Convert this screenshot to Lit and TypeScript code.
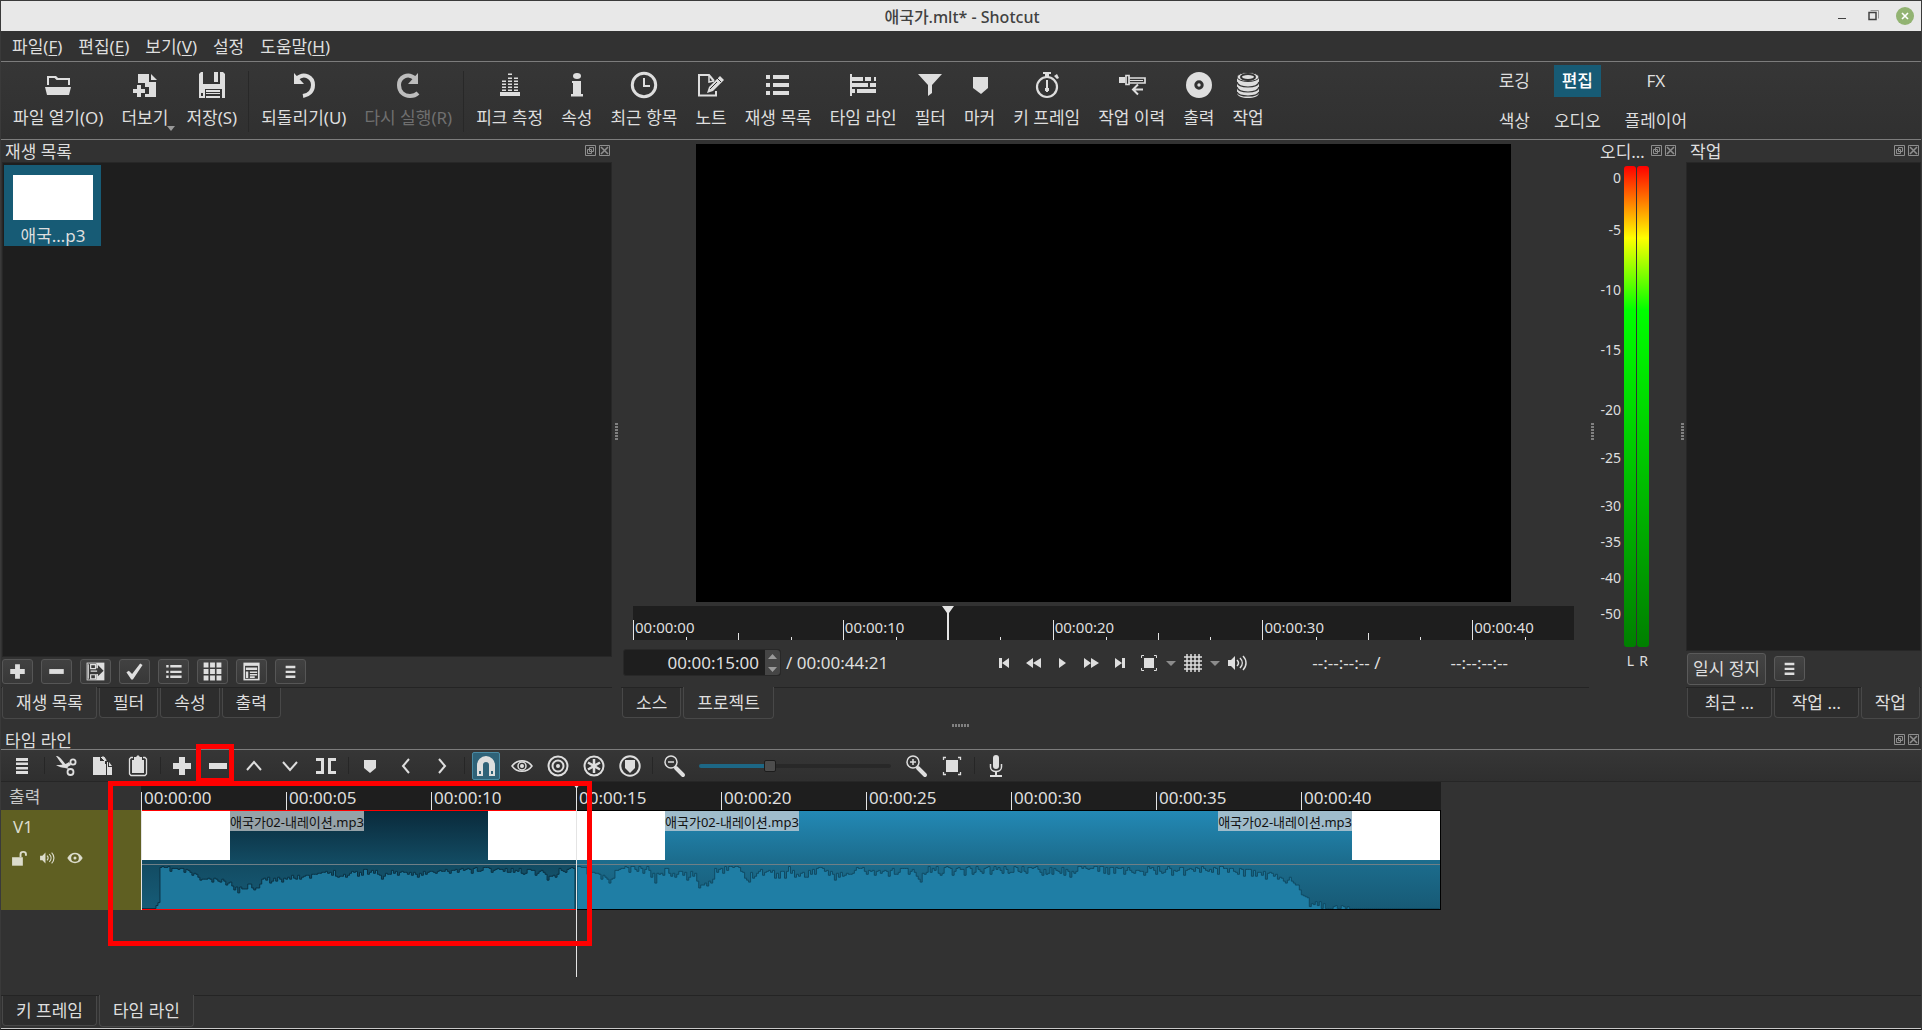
import { LitElement, html, css, svg, nothing } from "lit";
import type { SVGTemplateResult } from "lit";
import { customElement, property } from "lit/decorators.js";
import { classMap } from "lit/directives/class-map.js";
import { styleMap } from "lit/directives/style-map.js";

type Icon = { box: number; art: SVGTemplateResult };

const icons: Record<string, Icon> = {
  open: { box: 28, art: svg`<path d="M4 14V6h7l2 2h12v6" fill="none" stroke="currentColor" stroke-width="2"/><path d="M4 5h8l2 2H4zM1 16h26l-2 8H3z"/>` },
  more: { box: 28, art: svg`<path d="M7 3h11v8h7v15H14v-3h4v-7h-4v-4H7z"/><path d="M20 3l6 6h-6z"/><path d="M6 14h4v4h4v4h-4v4H6v-4H2v-4h4z"/>` },
  save: { box: 28, art: svg`<path d="M1 3l2-2h2v12h17V1h3l2 2v24h-3v-9H7v9H1z"/><path d="M16 1h4v10h-4zM8 19h14v2H8zM8 22h14v1H8zM8 25h14v2H8z"/><path d="M3 22h2v3H3z" fill="#333"/>` },
  undo: { box: 28, art: svg`<path d="M7 7.500C14 1 23 6 23 14c0 6-4 10-10 11" fill="none" stroke="currentColor" stroke-width="4"/><path d="M4 2v11h10z"/>` },
  redo: { box: 28, art: svg`<path d="M21 7.500C14 1 5 6 5 14c0 7 5 11 11 11 3 0 6-1 8-3" fill="none" stroke="currentColor" stroke-width="4"/><path d="M24 2v11H14z"/>` },
  peak: { box: 28, art: svg`<path d="M4 21h20v4H4z"/>${[10, 13, 16, 19].map((y) => svg`<path d="M6 ${y - 0.5}h4v1.500H6zM12 ${y - 0.5}h4v1.500h-4zM18 ${y - 0.5}h4v1.500h-4z"/>`)}<path d="M12 2.500h4V4h-4zM12 6.500h4V8h-4zM18 6.500h4V8h-4z"/>` },
  info: { box: 28, art: svg`<ellipse cx="14" cy="5" rx="4" ry="3"/><path d="M9 10h9v13h2v2.500H8V23h2V12H9z"/>` },
  clock: { box: 28, art: svg`<circle cx="14" cy="14" r="11.700" fill="none" stroke="currentColor" stroke-width="3"/><path d="M14 7v8h6" fill="none" stroke="currentColor" stroke-width="2"/>` },
  note: { box: 28, art: svg`<path d="M19 20v4.500H2V4h10l5 6" fill="none" stroke="currentColor" stroke-width="2"/><path d="M12 4v7l5-1" fill="none" stroke="currentColor" stroke-width="1.500"/><path d="M10 22l2-6L23 5l4 4-11 11z"/><path d="M20 7l4 4M13 18l7-7" stroke="#333" stroke-width="1"/>` },
  list: { box: 28, art: svg`<path d="M2 4h4v4H2zM9 4h16v4H9zM2 12h4v4H2zM9 12h16v4H9zM2 20h4v4H2zM9 20h16v4H9z"/>` },
  timeline: { box: 28, art: svg`<path d="M1 3h2v22H1zM3 6h11v4H3zM16 6h6v4h-6zM25 6h2v4h-2zM3 12h16v4H3zM21 12h6v4h-6zM3 18h3v4H3zM8 18h19v4H8z"/>` },
  filter: { box: 28, art: svg`<path d="M2 3h24L16 14v8l-4 3V14z"/>` },
  marker: { box: 28, art: svg`<path d="M7 6h15v11l-7 6-8-6z"/>` },
  watch: { box: 28, art: svg`<circle cx="14" cy="16" r="10" fill="none" stroke="currentColor" stroke-width="2.200"/><path d="M10 1h8v2h-2v4h-4V3h-2zM13 9h2v12h-2z"/><path d="M12 17h4v3h-4zM21 5l3-2 2 4-2 1z"/>` },
  history: { box: 28, art: svg`<path d="M1 6h6v6H1z"/><path d="M8 4.500h3v9H8zM11 7h16v5H11z" fill="none" stroke="currentColor" stroke-width="1.700"/><path d="M12 9h13v1H12z"/><path d="M25 18.500H15M20 13.500l-5 5 5 5" fill="none" stroke="currentColor" stroke-width="2"/>` },
  disc: { box: 28, art: svg`<circle cx="14" cy="14" r="13"/><circle cx="14" cy="14" r="3.200" fill="currentColor" stroke="#333" stroke-width="3"/>` },
  jobs: { box: 28, art: svg`<path d="M3 5v17c0 3 5 5 11 5s11-2 11-5V5z"/><ellipse cx="14" cy="6" rx="11" ry="4.500" stroke="#333" stroke-width="1"/><ellipse cx="14" cy="6" rx="7" ry="3" stroke="#333" stroke-width="2"/><path d="M3 11c1 4 6 5 11 5s10-1 11-5M3 16c1 4 6 5 11 5s10-1 11-5M3 21c1 3 6 4 11 4s10-1 11-4" fill="none" stroke="#333" stroke-width="1.200"/>` },
  menu: { box: 26, art: svg`<path d="M7 5h12v3H7zM7 9.500h12v2.500H7zM7 14h12v2.500H7zM7 18h12v3H7z"/>` },
  bars: { box: 26, art: svg`<path d="M7 6h12v3H7zM7 12h12v3H7zM7 18h12v3H7z"/>` },
  cut: { box: 26, art: svg`<path d="M3 3c3 0 5 2 13 13l-4-1C8 10 6 7 3 3zM3 12c5 0 9 0 13-3l2 3-5 3c-4 0-7-1-10-3z"/><circle cx="20" cy="9" r="2.600" fill="none" stroke="currentColor" stroke-width="1.800"/><circle cx="17.500" cy="19" r="3" fill="none" stroke="currentColor" stroke-width="1.800"/>` },
  copy: { box: 26, art: svg`<path d="M4 4h7v4h5v3h1v11H4z"/><path d="M12 4l4 4M13 4h2l2 3v1z" stroke="currentColor" stroke-width="1"/><path d="M18 9h1v5h4v8h-5z"/><path d="M20 9l3 4h-3z"/>` },
  paste: { box: 26, art: svg`<path d="M8 4.500H6L4.500 6v15L6 22.500h14l1.500-1.500V6L20 4.500h-2" fill="none" stroke="currentColor" stroke-width="1.300"/><path d="M7 7h12v13H7zM9 4h2l2-2 2 2h2v3H9z"/>` },
  plus: { box: 26, art: svg`<path d="M10 4h6v6h6v6h-6v6h-6v-6H4v-6h6z"/>` },
  minus: { box: 26, art: svg`<path d="M4 10h18v6H4z"/>` },
  up: { box: 26, art: svg`<path d="M6 17l7-8 7 8" fill="none" stroke="currentColor" stroke-width="2"/>` },
  down: { box: 26, art: svg`<path d="M6 9l7 8 7-8" fill="none" stroke="currentColor" stroke-width="2"/>` },
  split: { box: 26, art: svg`<path d="M3 5h8v16H3v-3h5V8H3zM23 5h-8v16h8v-3h-5V8h5z"/>` },
  flag: { box: 26, art: svg`<path d="M7 7h12v8l-6 5-6-5z"/>` },
  prev: { box: 26, art: svg`<path d="M16 6l-6 7 6 7" fill="none" stroke="currentColor" stroke-width="2"/>` },
  next: { box: 26, art: svg`<path d="M10 6l6 7-6 7" fill="none" stroke="currentColor" stroke-width="2"/>` },
  magnet: { box: 26, art: svg`<path d="M4 23V12a9 9 0 0 1 18 0v11h-6V12a3 3 0 0 0-6 0v11z"/><path d="M6 18h2v3H6zM18 18h2v3h-2z" fill="#2f6278"/>` },
  scrub: { box: 26, art: svg`<path d="M3 13c5-7 15-7 20 0-5 7-15 7-20 0z" fill="none" stroke="currentColor" stroke-width="1.500"/><circle cx="13" cy="13" r="4" fill="none" stroke="currentColor" stroke-width="1.500"/><circle cx="13" cy="13" r="2"/>` },
  ripple: { box: 26, art: svg`<circle cx="13" cy="13" r="9.500" fill="none" stroke="currentColor" stroke-width="2"/><circle cx="13" cy="13" r="5.500" fill="none" stroke="currentColor" stroke-width="2"/><circle cx="13" cy="13" r="2"/>` },
  rippleAll: { box: 26, art: svg`<circle cx="13" cy="13" r="9.500" fill="none" stroke="currentColor" stroke-width="2"/><path d="M13 6v14M7 9.500l12 7M19 9.500l-12 7" stroke="currentColor" stroke-width="2.500"/>` },
  rippleMark: { box: 26, art: svg`<circle cx="13" cy="13" r="9.700" fill="none" stroke="currentColor" stroke-width="2"/><path d="M8 7h10v8l-5 5-5-5z"/>` },
  zoomOut: { box: 26, art: svg`<circle cx="10" cy="9" r="6" fill="none" stroke="currentColor" stroke-width="1.500"/><path d="M7 9h6" stroke="currentColor" stroke-width="1.500"/><path d="M15 15l7 7" stroke="currentColor" stroke-width="4" stroke-linecap="round"/>` },
  zoomIn: { box: 26, art: svg`<circle cx="10" cy="9" r="6" fill="none" stroke="currentColor" stroke-width="1.500"/><path d="M7 9h6M10 6v6" stroke="currentColor" stroke-width="1.500"/><path d="M15 15l7 7" stroke="currentColor" stroke-width="4" stroke-linecap="round"/>` },
  fit: { box: 26, art: svg`<path d="M7 7h12v12H7z"/><path d="M4.500 7V4.500H7M19 4.500h2.500V7M21.500 19v2.500H19M7 21.500H4.500V19" fill="none" stroke="currentColor" stroke-width="1.300"/>` },
  mic: { box: 26, art: svg`<rect x="10" y="2" width="6" height="14" rx="3"/><path d="M7.500 11v3c0 6 11 6 11 0v-3" fill="none" stroke="currentColor" stroke-width="1.500"/><path d="M12 18h2v4h-2zM7 22h12v2H7z"/>` },
  update: { box: 26, art: svg`<path d="M2 2h22v22H2z"/><path d="M3 3h11v6h2V5l7 7-7 7v-3h-2v7H3z" fill="#383838"/><path d="M4 4v18M7 4.500h6v5H7zM7 17h6v5H7zM7 12.500h8" fill="none" stroke="currentColor" stroke-width="1.500"/>` },
  check: { box: 26, art: svg`<path d="M3 14l3-2 4 4L20 3l3 2-12 18H9z"/>` },
  details: { box: 26, art: svg`<path d="M4 5h3v3H4zM9 5h14v3H9zM4 12h3v3H4zM9 12h14v3H9zM4 18h3v3H4zM9 18h14v3H9z"/>` },
  tiles: { box: 26, art: svg`<path d="M2 2h6v6H2zM10 2h6v6h-6zM18 2h6v6h-6zM2 10h6v6H2zM10 10h6v6h-6zM18 10h6v6h-6zM2 18h6v6H2zM10 18h6v6h-6zM18 18h6v6h-6z"/>` },
  sheet: { box: 26, art: svg`<path d="M3 2h20v22H3z"/><path d="M5 6h16v16H5z" fill="#383838"/><path d="M6 8h14v3H6zM6 13h3v8H6zM11 13h9v2h-9zM11 16h9v2h-9zM11 19h6v2h-6z"/>` },
  toStart: { box: 26, art: svg`<path d="M8 8h3v10H8zM18 8v10l-7-5z"/>` },
  rewind: { box: 26, art: svg`<path d="M13 8v10l-7-5zM21 8v10l-8-5z"/>` },
  play: { box: 26, art: svg`<path d="M10 8v10l7-5z"/>` },
  forward: { box: 26, art: svg`<path d="M6 8v10l7-5zM13 8v10l8-5z"/>` },
  toEnd: { box: 26, art: svg`<path d="M8 8v10l7-5zM15 8h3v10h-3z"/>` },
  frame: { box: 26, art: svg`<path d="M8 8h10v10H8z"/><path d="M5.500 8V5.500H8M18 5.500h2.500V8M20.500 18v2.500H18M8 20.500H5.500V18" fill="none" stroke="currentColor" stroke-width="1"/>` },
  grid: { box: 26, art: svg`<path d="M7 4v18M11 4v18M15 4v18M19 4v18M4 7h18M4 11h18M4 15h18M4 19h18" fill="none" stroke="currentColor" stroke-width="1.500"/>` },
  sound: { box: 26, art: svg`<path d="M4 10h3l4-4v14l-4-4H4z"/><path d="M13 10c2 2 2 4 0 6M16 8c3 3 3 7 0 10M19 6c4 4 4 10 0 14" fill="none" stroke="currentColor" stroke-width="1.500"/>` },
  caret: { box: 12, art: svg`<path d="M1 4h10L6 9z" fill="#8c8c8c"/>` },
  unlock: { box: 26, art: svg`<path d="M4 12h14v11H4z"/><path d="M15 12V8c0-4 7-4 7 0v2" fill="none" stroke="currentColor" stroke-width="2.500"/>` },
  eye: { box: 26, art: svg`<path d="M3 13c5-9 15-9 20 0-5 9-15 9-20 0z"/><circle cx="13" cy="13" r="3.500" stroke="#5f5f22" stroke-width="3"/>` },
  float: { box: 11, art: svg`<path d="M.5.500h10v10H.500zM4.500 2.500h4v4h-4zM2.500 4.500h4v4h-4z" fill="none" stroke="#8e8e8e" stroke-width="1"/>` },
  close: { box: 11, art: svg`<path d="M.5.500h10v10H.500z" fill="none" stroke="#8e8e8e" stroke-width="1"/><path d="M2 2l7 7M9 2l-7 7" stroke="#8e8e8e" stroke-width="1.600"/>` },
};

function icon(name: string, size: number) {
  const { box, art } = icons[name];
  return html`<svg class="icon" width=${size} height=${size} viewBox="0 0 ${box} ${box}" aria-hidden="true">${art}</svg>`;
}

const base = css`
  * { box-sizing: border-box; }
  button, input {
    font: inherit;
    color: inherit;
    margin: 0;
    padding: 0;
    border: 0;
    background: none;
  }
  button { white-space: nowrap; }
  .icon { display: block; fill: currentColor; flex: none; }
`;

/* ---------- Dock chrome ---------- */

@customElement("dock-title")
class DockTitle extends LitElement {
  @property() label = "";
  static styles = [base, css`
    :host { display: flex; height: 22px; padding: 0 2px 0 4px; align-items: center; gap: 3px; flex: none; }
    .name { flex: 1; white-space: nowrap; overflow: hidden; line-height: 22px; font-weight: 400; font-size: 17px; margin: 0; padding-top: 2px; }
    button { margin-bottom: 2px; }
  `];
  render() {
    return html`<h2 class="name">${this.label}</h2>
      <button aria-label="분리">${icon("float", 11)}</button>
      <button aria-label="닫기">${icon("close", 11)}</button>`;
  }
}

@customElement("dock-tabs")
class DockTabs extends LitElement {
  @property({ attribute: false }) tabs: string[] = [];
  @property({ type: Number }) active = 0;
  @property({ type: Boolean, reflect: true }) stretch = false;
  static styles = [base, css`
    :host { display: flex; height: 33px; gap: 2px; padding-left: 1px; align-items: flex-start; flex: none; border-top: 1px solid #242424; }
    :host([stretch]) { padding-right: 1px; }
    :host([stretch]) .tab { flex-grow: 2; }
    :host([stretch]) .tab.on { flex-grow: 0; }
    .tab { height: 30px; padding: 0 13px; border: 1px solid #484848; border-top: 0; border-radius: 0 0 4px 4px; background: #2d2d2d; line-height: 28px; }
    .tab.on { height: 32px; margin-top: -1px; background: #323232; line-height: 32px; }
  `];
  render() {
    return this.tabs.map((t, i) => html`<button role="tab" aria-selected=${i === this.active}
      class=${classMap({ tab: true, on: i === this.active })}>${t}</button>`);
  }
}

/* ---------- Playlist ---------- */

@customElement("playlist-dock")
class PlaylistDock extends LitElement {
  static styles = [base, css`
    :host { display: flex; flex-direction: column; min-width: 0; }
    .files { flex: 1; background: #1e1e1e; border: 1px solid #272727; padding: 2px 1px; margin: 0 0 2px 1px; list-style: none; }
    .file { width: 97px; height: 81px; background: #175b75; padding: 10px 8px 0 9px; text-align: center; }
    .thumb { height: 45px; background: #fff; }
    .name { line-height: 32px; display: block; }
    .tools { display: flex; gap: 8px; padding: 0 1px; margin-bottom: 3px; }
    .tools button { width: 31px; height: 25px; border: 1px solid #565656; border-radius: 3px; background: linear-gradient(#414141, #383838); display: grid; place-items: center; }
    dock-tabs { --tab-gap: 3px; }
  `];
  render() {
    const tools = [["plus", "추가"], ["minus", "제거"], ["update", "업데이트"], ["check", "선택"], ["details", "상세"], ["tiles", "타일"], ["sheet", "아이콘"], ["bars", "메뉴"]];
    return html`<dock-title label="재생 목록"></dock-title>
      <ul class="files"><li class="file"><div class="thumb"></div><span class="name">애국…p3</span></li></ul>
      <div class="tools">${tools.map(([n, t]) => html`<button aria-label=${t}>${icon(n, 21)}</button>`)}</div>
      <dock-tabs .tabs=${["재생 목록", "필터", "속성", "출력"]} active="0"></dock-tabs>`;
  }
}

/* ---------- Player ---------- */

@customElement("player-view")
class PlayerView extends LitElement {
  static styles = [base, css`
    :host { display: flex; flex-direction: column; min-width: 0; }
    .stage { flex: 1; min-height: 0; display: flex; justify-content: center; padding: 4px 15px 4px 12px; }
    .video { height: 100%; aspect-ratio: 16 / 9; background: #000; }
    .ruler { position: relative; display: flex; align-items: flex-end; height: 34px; margin: 0 15px 0 12px; background: #1e1e1e; font-size: 15px; }
    .tick { flex: 1 1 0; min-width: 0; height: 3px; border-left: 1px solid #e4e4e4; }
    .tick.mid { height: 7px; }
    .tick.major { height: 20px; line-height: 14px; padding-left: 1px; white-space: nowrap; }
    .tick.last { flex-grow: 0.93; }
    .head { position: absolute; top: 0; bottom: 0; width: 12px; margin-left: -6px; display: flex; justify-content: center; }
    .head svg { display: block; height: 34px; width: 12px; fill: #e4e4e4; }
    .transport { display: flex; align-items: center; height: 45px; padding: 0 81px 0 2px; margin-bottom: 2px; }
    .spin { display: flex; width: 158px; height: 27px; border: 1px solid #282828; border-radius: 3px; background: #1e1e1e; }
    .spin input { flex: 1; min-width: 0; text-align: right; padding-right: 6px; }
    .steps { width: 15px; background: #454545; border-radius: 0 3px 3px 0; display: grid; place-items: center; }
    .steps svg { display: block; }
    .total { margin-left: 5px; flex: 1; white-space: nowrap; }
    .keys { display: flex; align-items: center; gap: 3px; }
    .keys .narrow { width: 12px; }
    .keys button { width: 26px; }
    .range { margin-left: 62px; display: flex; gap: 70px; white-space: nowrap; }
  `];
  render() {
    const ticks = Array.from({ length: 18 }, (_, i) => i);
    const keys = [["toStart", "처음"], ["rewind", "되감기"], ["play", "재생"], ["forward", "빨리 감기"], ["toEnd", "끝"], ["frame", "확대"], ["caret", "확대 메뉴"], ["grid", "격자"], ["caret", "격자 메뉴"], ["sound", "음량"]];
    return html`<div class="stage"><div class="video"></div></div>
      <div class="ruler">
        ${ticks.map((i) => html`<div class=${classMap({ tick: true, mid: i % 4 === 2, major: i % 4 === 0, last: i === 17 })}>${i % 4 === 0 ? `00:00:${String(i * 2.5).padStart(2, "0")}` : nothing}</div>`)}
        <div class="head" style=${styleMap({ left: `${(15 / 44.84) * 100}%` })}><svg viewBox="0 0 12 34"><path d="M0 0h12L7 7v27H5V7z"/></svg></div>
      </div>
      <div class="transport">
        <div class="spin"><input aria-label="위치" value="00:00:15:00" /><div class="steps">
          <svg width="9" height="20" viewBox="0 0 9 20" fill="#9a9a9a"><path d="M0 6l4.500-5L9 6zM0 14l4.500 5L9 14z"/></svg></div></div>
        <span class="total">/ 00:00:44:21</span>
        <div class="keys">${keys.map(([n, t]) => html`<button aria-label=${t} class=${classMap({ narrow: n === "caret" })}>${icon(n, n === "caret" ? 12 : 26)}</button>`)}</div>
        <div class="range"><span>--:--:--:-- /</span><span>--:--:--:--</span></div>
      </div>
      <dock-tabs .tabs=${["소스", "프로젝트"]} active="1"></dock-tabs>`;
  }
}

/* ---------- Peak meter ---------- */

@customElement("peak-meter")
class PeakMeter extends LitElement {
  static styles = [base, css`
    :host { display: flex; flex-direction: column; }
    .meter { flex: 1; display: flex; gap: 3px; padding: 4px 0 0; font-size: 14px; }
    .scale { width: 25px; display: flex; flex-direction: column; }
    .mark { flex: 1 1 0; min-height: 0; display: flex; align-items: flex-end; justify-content: flex-end; line-height: 20px; }
    .bars { display: flex; gap: 1px; }
    .bar { width: 12px; border-radius: 3px; background: linear-gradient(#f00 0%, #ff0 15%, #0f0 30%, #007f00 100%); }
    .legend { height: 73px; padding: 4px 0 0 28px; display: flex; font-size: 14px; line-height: 20px; }
    .legend span { width: 13px; text-align: center; }
  `];
  render() {
    const marks: [string, number][] = [["0", 22], ["-5", 52], ["-10", 60], ["-15", 60], ["-20", 60], ["-25", 48], ["-30", 48], ["-35", 36], ["-40", 36], ["-50", 36], ["", 23]];
    return html`<dock-title label="오디…"></dock-title>
      <div class="meter">
        <div class="scale">${marks.map(([t, w]) => html`<div class="mark" style=${styleMap({ flexGrow: String(w) })}>${t}</div>`)}</div>
        <div class="bars"><div class="bar"></div><div class="bar"></div></div>
      </div>
      <div class="legend"><span>L</span><span>R</span></div>`;
  }
}

/* ---------- Jobs ---------- */

@customElement("jobs-dock")
class JobsDock extends LitElement {
  static styles = [base, css`
    :host { display: flex; flex-direction: column; min-width: 0; }
    .queue { flex: 1; background: #1e1e1e; border: 1px solid #272727; }
    .row { display: flex; align-items: center; gap: 8px; height: 35px; padding-left: 1px; margin-bottom: 1px; }
    .row button { border: 1px solid #5a5a5a; border-radius: 3px; background: linear-gradient(#444, #393939); }
    .pause { height: 32px; padding: 0 5px; }
    .more { width: 31px; height: 25px; display: grid; place-items: center; }
  `];
  render() {
    return html`<dock-title label="작업"></dock-title>
      <div class="queue"></div>
      <div class="row"><button class="pause">일시 정지</button><button class="more" aria-label="메뉴">${icon("bars", 21)}</button></div>
      <dock-tabs stretch .tabs=${["최근 …", "작업 …", "작업"]} active="2"></dock-tabs>`;
  }
}

/* ---------- Timeline ---------- */

/* Waveform envelope as [x, depth below the zero line], in clip pixels. */
const firstWave: [number, number][] = [[0, 45], [12, 45], [17, 36], [18, 2], [34, 3], [51, 7], [56, 13], [66, 14], [78, 15], [88, 18], [96, 24], [104, 20], [114, 21], [120, 14], [145, 12], [153, 9], [161, 12], [177, 8], [194, 6], [200, 10], [210, 7], [226, 5], [236, 6], [240, 14], [247, 5], [263, 8], [288, 7], [308, 5], [341, 3], [365, 4], [390, 5], [402, 6], [409, 13], [418, 4], [433, 3], [435, 3]];
const secondWave: [number, number][] = [[0, 1], [14, 6], [24, 11], [36, 15], [39, 2], [60, 3], [72, 3], [78, 12], [84, 4], [100, 5], [108, 9], [116, 6], [123, 19], [132, 16], [138, 3], [144, 4], [145, 18], [147, 1], [160, 1], [170, 14], [178, 4], [196, 6], [206, 8], [212, 2], [222, 10], [240, 3], [255, 7], [272, 10], [281, 2], [300, 7], [316, 5], [336, 3], [343, 16], [349, 3], [400, 3], [450, 3], [485, 3], [492, 7], [498, 2], [550, 3], [565, 8], [572, 3], [620, 3], [655, 3], [675, 6], [696, 9], [707, 14], [718, 12], [722, 22], [726, 32], [739, 38], [756, 42], [779, 44], [865, 45]];

function wavePath(env: [number, number][], width: number, rough: number, quietUntil: number, quietFrom: number) {
  let seed = 11;
  const rnd = () => (seed = (seed * 16807) % 2147483647) / 2147483647;
  let k = 0;
  let d = "";
  for (let x = 0; x <= width; x += 2) {
    while (k < env.length - 2 && env[k + 1][0] <= x) k++;
    const [x0, y0] = env[k];
    const [x1, y1] = env[k + 1];
    const mean = y0 + ((y1 - y0) * Math.min(1, (x - x0) / (x1 - x0)));
    const noise = x < quietUntil || x > quietFrom ? 0 : (Math.pow(rnd(), 2) - 0.2) * rough;
    d += `L${x} ${Math.round(Math.max(1, Math.min(44, mean + noise))) + 0.5}H${x + 2}`;
  }
  return `M0 46${d}V46z`;
}

@customElement("timeline-clip")
class TimelineClip extends LitElement {
  @property({ attribute: false }) wave = "";
  @property({ type: Number }) span = 0;
  @property({ type: Boolean, reflect: true }) selected = false;
  static styles = [base, css`
    :host { display: flex; flex-direction: column; height: 100px; border: 1px solid #000; border-left-width: 0; background: linear-gradient(#2389b5, #1c6d8e 50%, #175a75); --shape: #1f7ea5; --edge: #104a63; --tag: #9fbccb; }
    :host([selected]) { border-color: #f00; background: linear-gradient(#0a2a3b, #124a61 50%, #165c77); --shape: #1e789c; --edge: #0b3142; --tag: #96a2a8; }
    .strip { display: flex; height: 54px; align-items: flex-start; border-bottom: 1px solid #6f7f86; }
    .thumb { width: 88px; height: 49px; background: #fff; }
    .name { height: 20px; background: var(--tag); color: #111; font-size: 13px; line-height: 22px; white-space: nowrap; }
    .fill { flex: 1; }
    svg { display: block; width: 100%; height: 44px; }
    path { fill: var(--shape); stroke: var(--edge); stroke-width: 1px; }
  `];
  render() {
    return html`<div class="strip">
        <div class="thumb"></div><span class="name">애국가02-내레이션.mp3</span><div class="fill"></div>
        ${this.selected ? nothing : html`<span class="name">애국가02-내레이션.mp3</span>`}<div class="thumb"></div>
      </div>
      <svg viewBox="0 0 ${this.span} 45" preserveAspectRatio="none" aria-hidden="true"><path d=${this.wave}></path></svg>`;
  }
}

@customElement("timeline-dock")
class TimelineDock extends LitElement {
  static styles = [base, css`
    :host { display: flex; flex-direction: column; position: relative; }
    dock-title { height: 18px; }
    .tools { display: flex; align-items: center; height: 33px; padding-left: 3px; border-top: 1px solid #7c7c7c; border-bottom: 1px solid #262626; background: linear-gradient(#363636, #2f2f2f); }
    .tools button { width: 36px; height: 28px; display: grid; place-items: center; }
    .tools .on { width: 28px; margin: 0 4px; background: #2f6278; border: 1px solid #4a8aa3; border-radius: 2px; }
    .sep { width: 8px; height: 17px; display: grid; grid-template-columns: 1px; justify-content: center; }
    .sep::before { content: ""; background: #262626; }
    .zoom { appearance: none; width: 192px; height: 14px; margin: 0 7px; }
    .zoom::-webkit-slider-runnable-track { height: 4px; border-radius: 2px; background: linear-gradient(90deg, #1d6785 36%, #282828 36%); }
    .zoom::-webkit-slider-thumb { appearance: none; width: 12px; height: 12px; margin-top: -4px; border: 1px solid #1c1c1c; border-radius: 2px; background: #4d4d4d; }
    .area { position: relative; display: grid; grid-template-columns: 140px 1fr; grid-template-rows: 28px 100px; height: 213px; }
    .out { padding-left: 8px; line-height: 30px; color: #c8c8c8; }
    .ruler { display: flex; align-items: flex-end; width: 1300px; background: #1e1e1e; }
    .mark { width: 145px; height: 18px; border-left: 1px solid #e4e4e4; padding-left: 2px; line-height: 12px; }
    .mark:last-child { width: 140px; }
    .track { background: #5f5f22; padding: 5px 8px; color: #dcdccc; }
    .track h3 { margin: 0; padding-left: 4px; font-size: 17px; font-weight: 400; line-height: 24px; }
    .flags { display: flex; gap: 8px; padding-top: 9px; }
    .clips { display: grid; grid-template-columns: 435px 864px; border-left: 1px solid #e4e4e4; width: 1300px; }
    .head { position: absolute; left: 571px; top: 2px; width: 9px; height: 193px; fill: #e4e4e4; }
    .note { position: absolute; border: 5px solid #f00; }
    .note.clip { left: 107px; top: 50px; width: 484px; height: 165px; }
    .note.tool { left: 195px; top: 13px; width: 38px; height: 39px; }
  `];
  render() {
    const b = (n: string, label: string, on = false) => html`<button aria-label=${label} class=${classMap({ on })}>${icon(n, 26)}</button>`;
    const sep = html`<span class="sep"></span>`;
    const times = ["00", "05", "10", "15", "20", "25", "30", "35", "40"];
    return html`<dock-title label="타임 라인"></dock-title>
      <div class="tools">
        ${b("menu", "메뉴")}${sep}${b("cut", "잘라내기")}${b("copy", "복사")}${b("paste", "붙여넣기")}${sep}
        ${b("plus", "추가")}${b("minus", "리플 삭제")}${b("up", "올리기")}${b("down", "덮어쓰기")}${b("split", "나누기")}${sep}
        ${b("flag", "마커")}${b("prev", "이전")}${b("next", "다음")}${sep}
        ${b("magnet", "스냅", true)}${b("scrub", "스크럽")}${b("ripple", "리플")}${b("rippleAll", "전체 리플")}${b("rippleMark", "마커 리플")}${sep}
        ${b("zoomOut", "축소")}<input class="zoom" type="range" min="0" max="100" value="36" aria-label="확대 비율" />${b("zoomIn", "확대")}${b("fit", "맞춤")}${sep}${b("mic", "녹음")}
      </div>
      <div class="area">
        <div class="out">출력</div>
        <div class="ruler">${times.map((t) => html`<div class="mark">00:00:${t}</div>`)}</div>
        <div class="track"><h3>V1</h3><div class="flags">${icon("unlock", 20)}${icon("sound", 20)}${icon("eye", 20)}</div></div>
        <div class="clips">
          <timeline-clip selected .span=${435} .wave=${wavePath(firstWave, 433, 6, 20, 430)}></timeline-clip>
          <timeline-clip .span=${865} .wave=${wavePath(secondWave, 863, 9, 2, 780)}></timeline-clip>
        </div>
        <svg class="head" viewBox="0 0 9 193" aria-hidden="true"><path d="M1 0h7L5 4v189H4V4z"/></svg>
      </div>
      <dock-tabs .tabs=${["키 프레임", "타임 라인"]} active="1"></dock-tabs>
      <div class="note tool"></div><div class="note clip"></div>`;
  }
}

/* ---------- Window ---------- */

@customElement("app-root")
class AppRoot extends LitElement {
  static styles = [base, css`
    :host { display: flex; flex-direction: column; min-height: 100vh; box-sizing: border-box; border: 1px solid #3a3a3a; border-bottom-color: #111; background: #323232; color: #dedede; font-family: "Noto Sans", "Noto Sans CJK KR", sans-serif; font-size: 17px; line-height: 24px; }
    .title { display: flex; align-items: center; height: 30px; background: #e8e8e8; color: #414141; }
    .title h1 { flex: 1; margin: 0; padding: 2px 0 0 92px; text-align: center; font-size: 16px; font-weight: 500; line-height: 32px; }
    .win { display: flex; align-items: center; gap: 12px; width: 90px; padding-right: 7px; justify-content: flex-end; }
    .menu { display: flex; gap: 16px; height: 31px; padding: 1px 11px 0; line-height: 29px; border-bottom: 1px solid #7c7c7c; }
    .menu u { text-underline-offset: 2px; }
    .tools { display: flex; height: 78px; border-bottom: 1px solid #7c7c7c; background: linear-gradient(#363636, #303030); padding: 9px 0 7px 3px; }
    .tool { display: flex; flex-direction: column; align-items: center; padding: 0 9px; gap: 7px; line-height: 24px; position: relative; }
    .tool.off { color: #6f6f6f; }
    .tool.off .icon { color: #bdbdbd; }
    .tool .drop { position: absolute; right: 2px; bottom: 1px; }
    .sep { width: 1px; margin: 0 3px 0 2px; background: #282828; }
    .modes { flex: 1; display: grid; grid-template-columns: 47px 47px 78px; grid-template-rows: 32px 32px; gap: 8px 16px; justify-content: center; margin-top: -6px; padding-right: 8px; line-height: 32px; }
    .modes .on { background: #175b75; color: #fff; font-weight: 500; }
    .docks { flex: 1; display: grid; grid-template-columns: minmax(0, 611px) 9px minmax(0, 968px) 7px 82px 8px minmax(0, 1fr); min-height: 576px; }
    .grip { align-self: center; justify-self: center; margin-top: 4px; height: 18px; width: 3px; background: repeating-linear-gradient(#808080 0 2px, transparent 2px 3px); }
    .hgrip { align-self: center; margin: 4px 0; width: 18px; height: 3px; background: repeating-linear-gradient(90deg, #808080 0 2px, transparent 2px 3px); }
    timeline-dock { border-bottom: 1px solid #c8c8c8; }
  `];
  render() {
    const menus = [["파일", "F"], ["편집", "E"], ["보기", "V"], ["설정", ""], ["도움말", "H"]];
    const tool = (n: string, label: string, off = false) => html`<button class=${classMap({ tool: true, off })} ?disabled=${off}>${icon(n, 28)}<span>${label}</span>${n === "more" ? html`<svg class="drop" width="8" height="5" viewBox="0 0 8 5" fill="#999"><path d="M0 0h8L4 5z"/></svg>` : nothing}</button>`;
    const modes = ["로깅", "편집", "FX", "색상", "오디오", "플레이어"];
    return html`
      <header class="title"><h1>애국가.mlt* - Shotcut</h1>
        <div class="win">
          <button aria-label="최소화"><svg class="icon" width="20" height="18" viewBox="0 0 20 18"><path d="M6 11h8v1H6z"/></svg></button>
          <button aria-label="최대화"><svg class="icon" width="20" height="18" viewBox="0 0 20 18"><path d="M5 5.500h7v7H5z" fill="none" stroke="#414141" stroke-width="1.500"/><path d="M6.500 3.500h8v8" fill="none" stroke="#9a9a9a"/></svg></button>
          <button aria-label="닫기"><svg class="icon" width="18" height="18" viewBox="0 0 18 18"><circle cx="9" cy="9" r="9" fill="#92b372"/><path d="M6 6l6 6M12 6l-6 6" stroke="#fff" stroke-width="1.600"/></svg></button>
        </div></header>
      <nav class="menu">${menus.map(([t, k]) => html`<button>${t}${k ? html`(<u>${k}</u>)` : nothing}</button>`)}</nav>
      <div class="tools">
        ${tool("open", "파일 열기(O)")}${tool("more", "더보기")}${tool("save", "저장(S)")}<span class="sep"></span>
        ${tool("undo", "되돌리기(U)")}${tool("redo", "다시 실행(R)", true)}<span class="sep"></span>
        ${tool("peak", "피크 측정")}${tool("info", "속성")}${tool("clock", "최근 항목")}${tool("note", "노트")}${tool("list", "재생 목록")}${tool("timeline", "타임 라인")}${tool("filter", "필터")}${tool("marker", "마커")}${tool("watch", "키 프레임")}${tool("history", "작업 이력")}${tool("disc", "출력")}${tool("jobs", "작업")}
        <div class="modes">${modes.map((m) => html`<button class=${classMap({ on: m === "편집" })}>${m}</button>`)}</div>
      </div>
      <main class="docks">
        <playlist-dock></playlist-dock><span class="grip"></span>
        <player-view></player-view><span class="grip"></span>
        <peak-meter></peak-meter><span class="grip"></span>
        <jobs-dock></jobs-dock>
      </main>
      <span class="hgrip"></span>
      <timeline-dock></timeline-dock>`;
  }
}
